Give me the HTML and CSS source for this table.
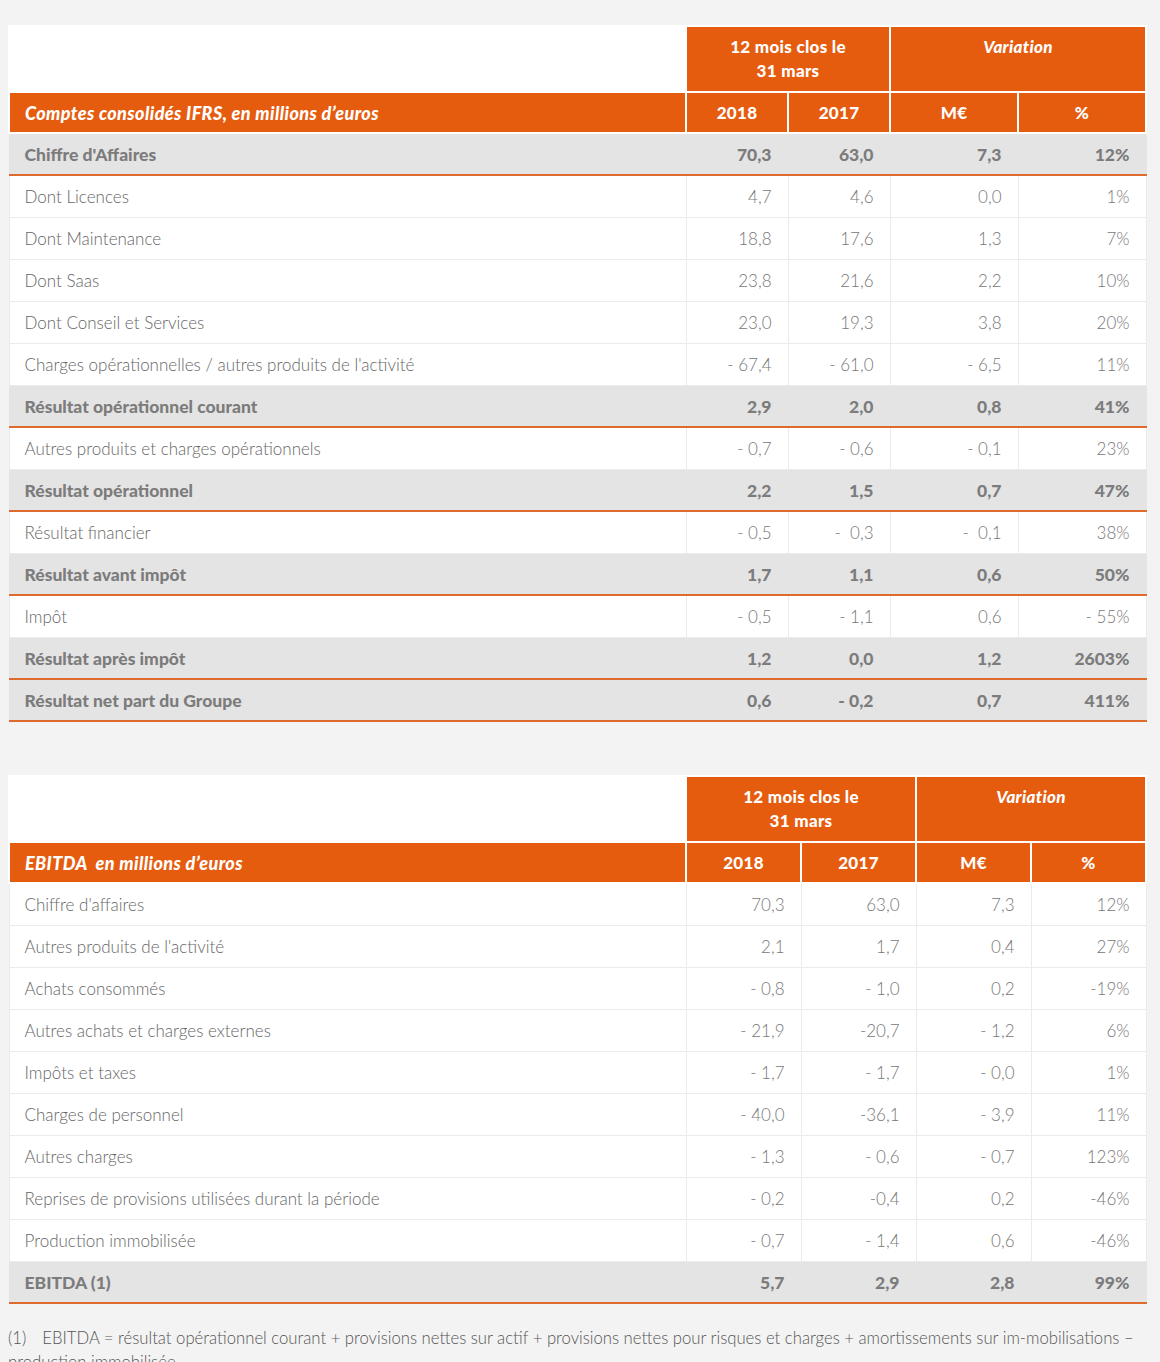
FILE: index.html
```html
<!DOCTYPE html>
<html lang="fr">
<head>
<meta charset="utf-8">
<title>Comptes consolidés</title>
<link rel="stylesheet" href="styles.css">
</head>
<body>
<div class="page">
  <table class="fin t1">
    <colgroup>
      <col class="c-label"><col class="c-y1"><col class="c-y1"><col class="c-v1"><col class="c-v1">
    </colgroup>
    <thead>
      <tr class="h1">
        <th class="blank"></th>
        <th colspan="2">12 mois clos le<br>31 mars</th>
        <th colspan="2" class="it">Variation</th>
      </tr>
      <tr class="h2">
        <th class="title">Comptes consolidés IFRS, en millions d’euros</th>
        <th>2018</th><th>2017</th><th>M€</th><th>%</th>
      </tr>
    </thead>
    <tbody>
      <tr class="tot"><td>Chiffre d'Affaires</td><td>70,3</td><td>63,0</td><td>7,3</td><td>12%</td></tr>
      <tr><td>Dont Licences</td><td>4,7</td><td>4,6</td><td>0,0</td><td>1%</td></tr>
      <tr><td>Dont Maintenance</td><td>18,8</td><td>17,6</td><td>1,3</td><td>7%</td></tr>
      <tr><td>Dont Saas</td><td>23,8</td><td>21,6</td><td>2,2</td><td>10%</td></tr>
      <tr><td>Dont Conseil et Services</td><td>23,0</td><td>19,3</td><td>3,8</td><td>20%</td></tr>
      <tr><td>Charges opérationnelles / autres produits de l'activité</td><td>- 67,4</td><td>- 61,0</td><td>- 6,5</td><td>11%</td></tr>
      <tr class="tot"><td>Résultat opérationnel courant</td><td>2,9</td><td>2,0</td><td>0,8</td><td>41%</td></tr>
      <tr><td>Autres produits et charges opérationnels</td><td>- 0,7</td><td>- 0,6</td><td>- 0,1</td><td>23%</td></tr>
      <tr class="tot"><td>Résultat opérationnel</td><td>2,2</td><td>1,5</td><td>0,7</td><td>47%</td></tr>
      <tr><td>Résultat financier</td><td>- 0,5</td><td>-&nbsp; 0,3</td><td>-&nbsp; 0,1</td><td>38%</td></tr>
      <tr class="tot"><td>Résultat avant impôt</td><td>1,7</td><td>1,1</td><td>0,6</td><td>50%</td></tr>
      <tr><td>Impôt</td><td>- 0,5</td><td>- 1,1</td><td>0,6</td><td>- 55%</td></tr>
      <tr class="tot"><td>Résultat après impôt</td><td>1,2</td><td>0,0</td><td>1,2</td><td>2603%</td></tr>
      <tr class="tot"><td>Résultat net part du Groupe</td><td>0,6</td><td>- 0,2</td><td>0,7</td><td>411%</td></tr>
    </tbody>
  </table>

  <table class="fin t2">
    <colgroup>
      <col class="c-label2"><col class="c-n2"><col class="c-n2"><col class="c-n2"><col class="c-n2">
    </colgroup>
    <thead>
      <tr class="h1">
        <th class="blank"></th>
        <th colspan="2">12 mois clos le<br>31 mars</th>
        <th colspan="2" class="it">Variation</th>
      </tr>
      <tr class="h2">
        <th class="title">EBITDA&nbsp; en millions d’euros</th>
        <th>2018</th><th>2017</th><th>M€</th><th>%</th>
      </tr>
    </thead>
    <tbody>
      <tr><td>Chiffre d'affaires</td><td>70,3</td><td>63,0</td><td>7,3</td><td>12%</td></tr>
      <tr><td>Autres produits de l'activité</td><td>2,1</td><td>1,7</td><td>0,4</td><td>27%</td></tr>
      <tr><td>Achats consommés</td><td>- 0,8</td><td>- 1,0</td><td>0,2</td><td>-19%</td></tr>
      <tr><td>Autres achats et charges externes</td><td>- 21,9</td><td>-20,7</td><td>- 1,2</td><td>6%</td></tr>
      <tr><td>Impôts et taxes</td><td>- 1,7</td><td>- 1,7</td><td>- 0,0</td><td>1%</td></tr>
      <tr><td>Charges de personnel</td><td>- 40,0</td><td>-36,1</td><td>- 3,9</td><td>11%</td></tr>
      <tr><td>Autres charges</td><td>- 1,3</td><td>- 0,6</td><td>- 0,7</td><td>123%</td></tr>
      <tr><td>Reprises de provisions utilisées durant la période</td><td>- 0,2</td><td>-0,4</td><td>0,2</td><td>-46%</td></tr>
      <tr><td>Production immobilisée</td><td>- 0,7</td><td>- 1,4</td><td>0,6</td><td>-46%</td></tr>
      <tr class="tot"><td>EBITDA (1)</td><td>5,7</td><td>2,9</td><td>2,8</td><td>99%</td></tr>
    </tbody>
  </table>

  <p class="note"><span class="num">(1)</span>EBITDA = résultat opérationnel courant + provisions nettes sur actif + provisions nettes pour risques et charges + amortissements sur im-mobilisations – production immobilisée.</p>
</div>
</body>
</html>
```

FILE: styles.css
```css
html, body {
  margin: 0;
  padding: 0;
  background: #f3f3f3;
}
body {
  font-family: "Lato", "Open Sans", sans-serif;
  color: #666;
}
.page {
  padding: 25px 14px 0 8px;
}
.fin {
  width: 1137px;
  table-layout: fixed;
  border-collapse: collapse;
  font-size: 17px;
}
.t2 {
  margin-top: 53px;
}
.c-label { width: 677px; }
.c-y1 { width: 102px; }
.c-v1 { width: 128px; }
.c-label2 { width: 677px; }
.c-n2 { width: 115px; }

.fin th {
  background: #e65c0f;
  color: #fff;
  font-weight: 900;
  font-size: 17px;
  letter-spacing: 0.3px;
  border: 2px solid #fff;
  text-align: center;
}
.fin th.blank {
  background: #fff;
}
.fin th.it {
  font-style: italic;
}
.h1 th {
  height: 48px;
  padding: 8px 8px;
  line-height: 24px;
  vertical-align: top;
}
.h2 th {
  height: 39px;
  padding: 0 8px;
  vertical-align: middle;
}
.fin th.title {
  text-align: left;
  font-style: italic;
  font-size: 18px;
  letter-spacing: 0.4px;
  padding-left: 15px;
}
.fin td {
  height: 41px;
  padding: 0 16px 0 15px;
  background: #fff;
  border: 1px solid #ebebeb;
  text-align: right;
  font-weight: 300;
  color: #777;
  vertical-align: middle;
}
.fin td:first-child {
  text-align: left;
  color: #666;
}
.fin tr.tot td {
  height: 40px;
  background: #e4e4e4;
  font-weight: 900;
  font-size: 17.5px;
  color: #7c7c7c;
  border-left-color: #e4e4e4;
  border-right-color: #e4e4e4;
  border-bottom: 2px solid #df6a2d;
}
.note {
  margin: 22px 0 0;
  font-size: 16.7px;
  font-weight: 300;
  line-height: 24px;
  color: #555;
}
.note .num {
  margin-right: 16px;
}
```
